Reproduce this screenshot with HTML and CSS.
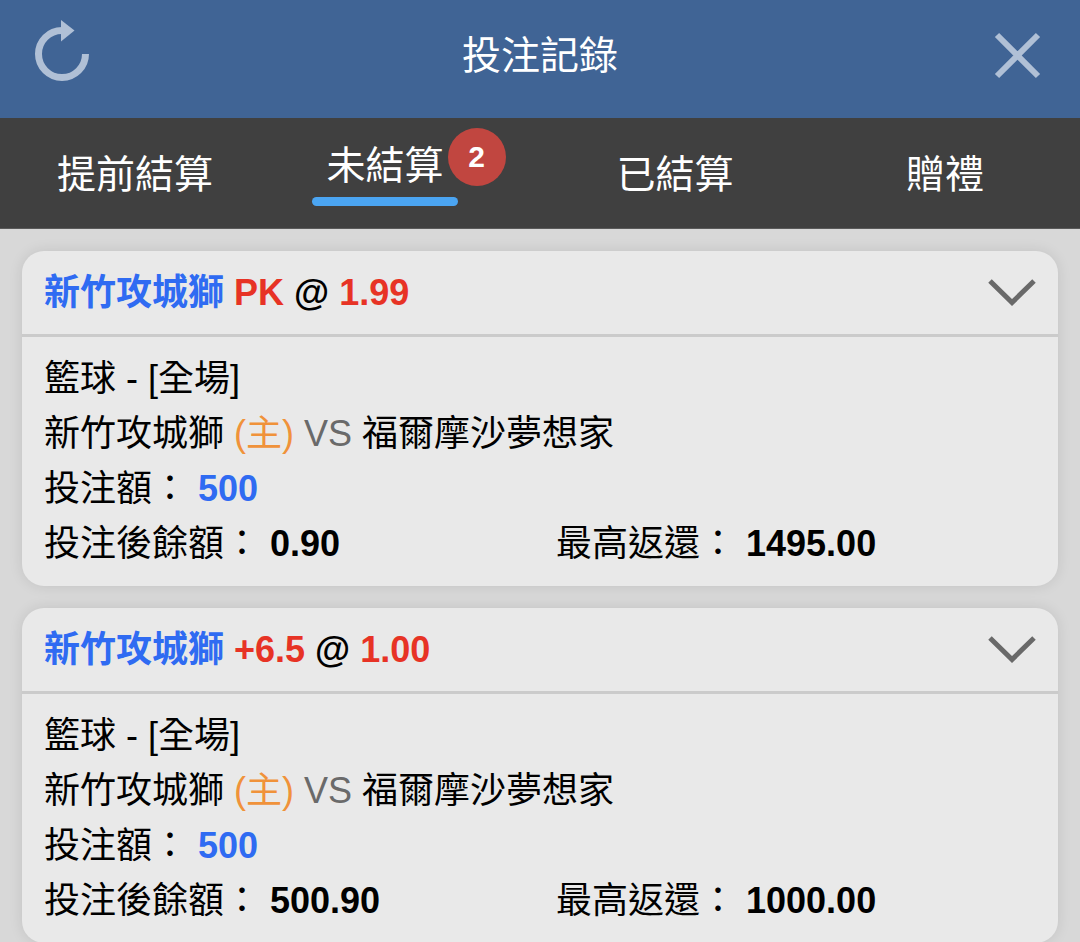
FILE: index.html
```html
<!DOCTYPE html>
<html lang="zh-Hant">
<head>
<meta charset="utf-8">
<meta name="viewport" content="width=device-width, initial-scale=1">
<title>投注記錄</title>
<link rel="stylesheet" href="styles.css">
</head>
<body>
<header class="topbar">
  <button class="icon-button" type="button" aria-label="重新整理">
    <svg width="56" height="64" viewBox="0 3 56 64" aria-hidden="true">
      <path d="M28 9.500A23.500 23.500 0 0 0 4.500 33A23.500 23.500 0 0 0 51.500 33" fill="none" stroke="currentColor" stroke-width="7"/>
      <path d="M27 -1V20.500L40.500 9.500Z" fill="currentColor"/>
    </svg>
  </button>
  <h1 class="title">投注記錄</h1>
  <button class="icon-button" type="button" aria-label="關閉">
    <svg width="56" height="64" viewBox="-1 0 56 64" aria-hidden="true">
      <path d="M6 11L47 52M47 11L6 52" fill="none" stroke="currentColor" stroke-width="6"/>
    </svg>
  </button>
</header>
<nav class="tabs">
  <button class="tab" type="button">提前結算</button>
  <button class="tab" type="button" aria-current="page">
    <span class="tab-label">未結算<span class="badge">2</span></span>
  </button>
  <button class="tab" type="button">已結算</button>
  <button class="tab" type="button">贈禮</button>
</nav>
<main class="bets">
  <article class="card">
    <header class="card-head">
      <h2 class="pick"><span class="team">新竹攻城獅</span> <span class="odds">PK</span> @ <span class="odds">1.99</span></h2>
      <button class="toggle" type="button" aria-label="收合">
        <svg width="48" height="28" viewBox="0 0 48 28" aria-hidden="true"><path d="M2 2L24 23.500L46 2" fill="none" stroke="currentColor" stroke-width="5"/></svg>
      </button>
    </header>
    <div class="card-body">
      <p class="line">籃球 - [全場]</p>
      <p class="line">新竹攻城獅 <span class="home">(主)</span> <span class="versus">VS</span> 福爾摩沙夢想家</p>
      <p class="line">投注額： <b class="stake">500</b></p>
      <div class="totals">
        <p class="line">投注後餘額： <b>0.90</b></p>
        <p class="line">最高返還： <b>1495.00</b></p>
      </div>
    </div>
  </article>
  <article class="card">
    <header class="card-head">
      <h2 class="pick"><span class="team">新竹攻城獅</span> <span class="odds">+6.5</span> @ <span class="odds">1.00</span></h2>
      <button class="toggle" type="button" aria-label="收合">
        <svg width="48" height="28" viewBox="0 0 48 28" aria-hidden="true"><path d="M2 2L24 23.500L46 2" fill="none" stroke="currentColor" stroke-width="5"/></svg>
      </button>
    </header>
    <div class="card-body">
      <p class="line">籃球 - [全場]</p>
      <p class="line">新竹攻城獅 <span class="home">(主)</span> <span class="versus">VS</span> 福爾摩沙夢想家</p>
      <p class="line">投注額： <b class="stake">500</b></p>
      <div class="totals">
        <p class="line">投注後餘額： <b>500.90</b></p>
        <p class="line">最高返還： <b>1000.00</b></p>
      </div>
    </div>
  </article>
</main>
</body>
</html>
```
FILE: styles.css
```css
* {
  box-sizing: border-box;
}

body {
  margin: 0;
  background: #d8d8d8;
  color: #000;
  font-family: "Liberation Sans", "Noto Sans CJK TC", sans-serif;
  font-size: 36px;
}

h1,
h2,
p {
  margin: 0;
}

button {
  padding: 0;
  border: 0;
  background: none;
  color: inherit;
  font: inherit;
}

svg {
  display: block;
  overflow: visible;
}

.topbar {
  display: flex;
  align-items: center;
  justify-content: space-between;
  padding: 0 34px 6px;
  height: 118px;
  background: #406495;
  color: #fff;
}

.icon-button {
  color: #b0c0d6;
}

.title {
  font-size: 39px;
  font-weight: 400;
  line-height: 56px;
}

.tabs {
  display: grid;
  grid-template-columns: repeat(4, 1fr);
  height: 111px;
  border-bottom: 1px solid #5a5a5a;
  background: #404040;
  color: #fff;
  font-size: 39px;
  line-height: 56px;
}

.tab {
  padding-top: 4px;
}

.tab-label {
  position: relative;
  display: inline-block;
  margin-right: 40px;
  padding: 0 14px 18px;
  vertical-align: middle;
}

.tab-label::after {
  content: "";
  position: absolute;
  right: 0;
  bottom: 6px;
  left: 0;
  height: 9px;
  border-radius: 5px;
  background: #4ba5f2;
}

.badge {
  position: absolute;
  top: -10px;
  right: -48px;
  width: 58px;
  height: 58px;
  border-radius: 50%;
  background: #c14640;
  font-size: 30px;
  font-weight: 700;
  line-height: 58px;
  text-align: center;
}

.bets {
  display: grid;
  gap: 22px;
  padding: 22px 22px 0;
}

.card {
  border-radius: 22px;
  background: #e9e9e9;
  box-shadow: 0 0 14px rgba(0, 0, 0, 0.1);
}

.card-head {
  display: flex;
  align-items: center;
  justify-content: space-between;
  padding: 14px 22px;
  border-bottom: 3px solid #cbcbcb;
}

.pick {
  font-size: 36px;
  font-weight: 700;
  line-height: 55px;
}

.team {
  color: #2f6bf2;
}

.odds {
  color: #e73325;
}

.toggle {
  color: #696969;
}

.card-body {
  padding: 14px 22px 15px;
}

.line {
  line-height: 55px;
}

.home {
  color: #f0923a;
}

.versus {
  color: #6a6a6a;
}

.stake {
  color: #2f6bf2;
}

.totals {
  display: grid;
  grid-template-columns: 1fr 1fr;
  gap: 32px;
}
```
